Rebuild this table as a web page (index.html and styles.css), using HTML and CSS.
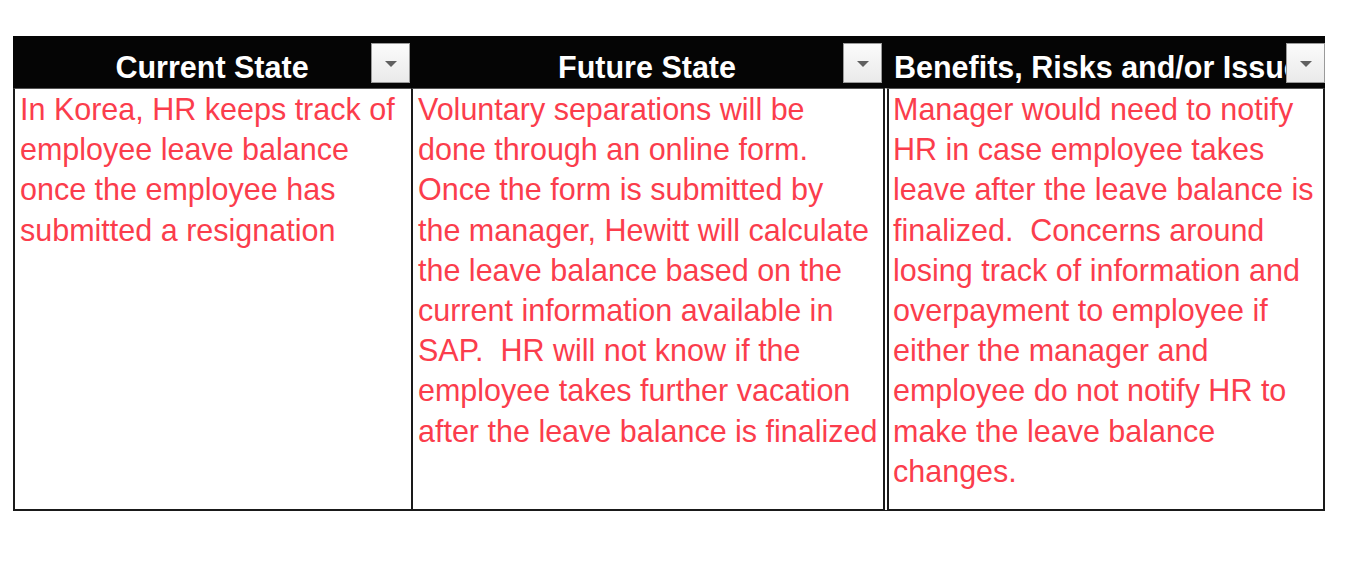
FILE: index.html
```html
<!DOCTYPE html>
<html>
<head>
<meta charset="utf-8">
<link rel="stylesheet" href="styles.css">
</head>
<body>
<div class="page">
  <div class="sheet">
    <div class="hcell c1">
      <div class="title">Current State</div>
      <div class="filter"><span class="tri"></span></div>
    </div>
    <div class="hcell c2">
      <div class="title">Future State</div>
      <div class="filter"><span class="tri"></span></div>
    </div>
    <div class="hcell c3">
      <div class="title left">Benefits, Risks and/or Issues</div>
      <div class="filter"><span class="tri"></span></div>
    </div>

    <div class="bcell b1">In Korea, HR keeps track of<br>employee leave balance<br>once the employee has<br>submitted a resignation</div>
    <div class="bcell b2">Voluntary separations will be<br>done through an online form.<br>Once the form is submitted by<br>the manager, Hewitt will calculate<br>the leave balance based on the<br>current information available in<br>SAP.&nbsp; HR will not know if the<br>employee takes further vacation<br>after the leave balance is finalized</div>
    <div class="bcell b3">Manager would need to notify<br>HR in case employee takes<br>leave after the leave balance is<br>finalized.&nbsp; Concerns around<br>losing track of information and<br>overpayment to employee if<br>either the manager and<br>employee do not notify HR to<br>make the leave balance<br>changes.</div>
  </div>
</div>
</body>
</html>
```

FILE: styles.css
```css
html, body {
  margin: 0;
  padding: 0;
  background: #ffffff;
}

.page {
  padding: 36px 0 0 13px;
}

.sheet {
  display: grid;
  grid-template-columns: 398px 472px 442px;
  grid-template-rows: 52px 423px;
  width: 1312px;
  font-family: "Liberation Sans", Arial, sans-serif;
}

.hcell {
  position: relative;
  background: #050505;
  color: #ffffff;
  overflow: hidden;
}

.title {
  font-weight: bold;
  font-size: 30.5px;
  line-height: 52px;
  padding-top: 5px;
  text-align: center;
  white-space: nowrap;
  overflow: hidden;
}

.title.left {
  text-align: left;
  padding-left: 11px;
}

.filter {
  position: absolute;
  top: 7px;
  right: 1px;
  width: 37px;
  height: 38px;
  background: linear-gradient(#fbfbfb, #eaeaea);
  border: 1px solid #9a9a9a;
  display: flex;
  align-items: center;
  justify-content: center;
}

.c3 .filter {
  right: 0;
}

.tri {
  width: 0;
  height: 0;
  border-left: 6px solid transparent;
  border-right: 6px solid transparent;
  border-top: 6px solid #606060;
  margin-top: 1px;
}

.bcell {
  background: #ffffff;
  color: #fb3d4c;
  font-size: 30.5px;
  line-height: 40.2px;
  white-space: nowrap;
  overflow: hidden;
  border-top: 1px solid #555;
  border-bottom: 2px solid #1a1a1a;
  padding: 0 0 0 5px;
}

.b1 {
  border-left: 2px solid #1a1a1a;
}

.b2 {
  border-left: 2px solid #1a1a1a;
}

.b3 {
  border-left: 6px double #1a1a1a;
  border-right: 2px solid #1a1a1a;
  padding-left: 4px;
}
```
